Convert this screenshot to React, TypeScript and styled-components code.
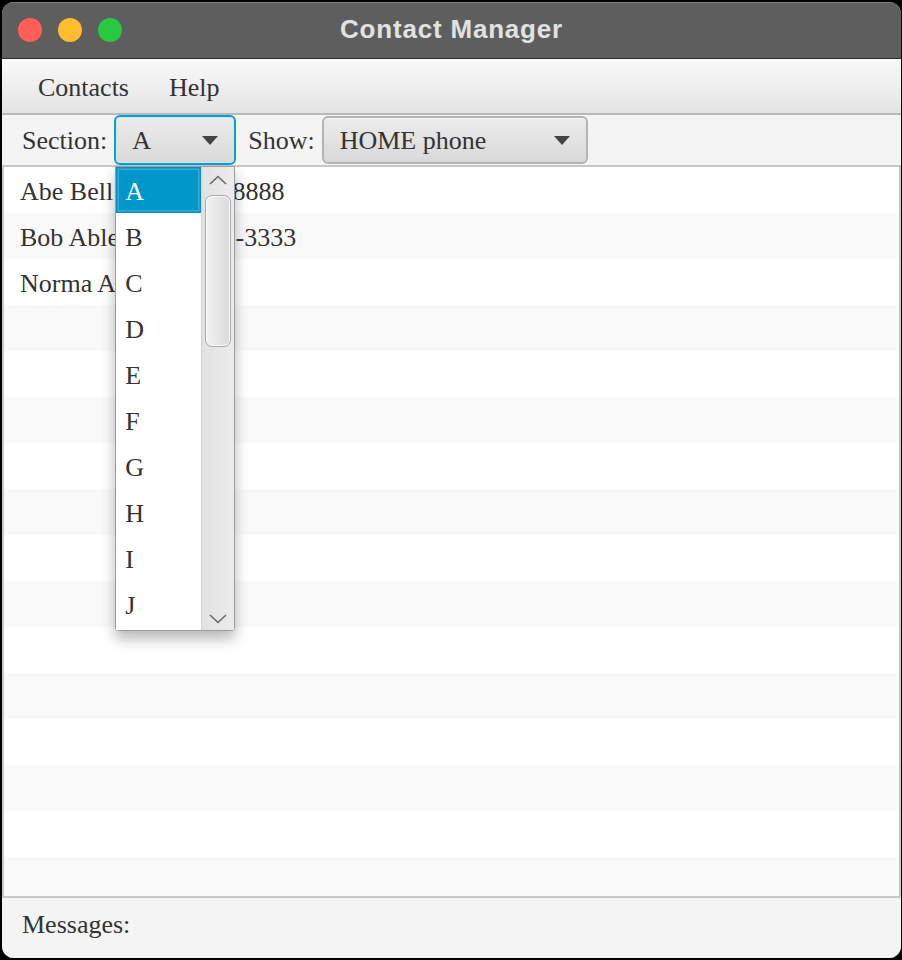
import React from "react";
import styled, { createGlobalStyle } from "styled-components";

const Global = createGlobalStyle`
  html, body { margin: 0; padding: 0; background: #000; }
  body { width: 902px; height: 960px; overflow: hidden; }
  * { box-sizing: border-box; }
`;

const SERIF = `"Liberation Serif", "Times New Roman", serif`;

const Window = styled.div`
  margin: 2px 0 0 2px;
  width: 899px;
  height: 956px;
  border-radius: 12px;
  overflow: hidden;
  background: #f4f4f4;
  display: flex;
  flex-direction: column;
  font-family: ${SERIF};
  font-size: 26px;
  color: #333;
  box-shadow: inset 0 0 0 1px #6a6a6a;
`;

const TitleBar = styled.div`
  position: relative;
  height: 57px;
  flex: none;
  background: #5e5e5e;
  border-top: 1px solid #7c7c7c;
  border-bottom: 1px solid #2a2a2a;
  display: flex;
  align-items: center;
  justify-content: center;
`;

const Lights = styled.div`
  position: absolute;
  left: 16px;
  top: 15px;
  display: flex;
  gap: 16px;
`;

const Light = styled.span<{ $c: string }>`
  width: 24px;
  height: 24px;
  border-radius: 50%;
  background: ${(p) => p.$c};
`;

const Title = styled.div`
  font-family: "Liberation Sans", Arial, sans-serif;
  font-weight: 700;
  font-size: 26px;
  letter-spacing: 0.8px;
  color: #e2e2e2;
  margin-top: -2px;
`;

const MenuBar = styled.div`
  height: 56px;
  flex: none;
  background: linear-gradient(#f9f9f9, #e4e4e4);
  border-bottom: 2px solid #b9b9b9;
  display: flex;
  align-items: center;
  padding: 4px 0 0 36px;
  gap: 40px;
`;

const MenuItem = styled.span``;

const ToolBar = styled.div`
  height: 52px;
  flex: none;
  background: #f4f4f4;
  border-bottom: 2px solid #c8c8c8;
  display: flex;
  align-items: center;
  padding-left: 20px;
`;

const Label = styled.span<{ $ml?: number; $mr?: number }>`
  margin-left: ${(p) => p.$ml ?? 0}px;
  margin-right: ${(p) => p.$mr ?? 8}px;
  padding-top: 1px;
`;

const ComboWrap = styled.div`
  position: relative;
`;

const Combo = styled.div<{ $w: number; $focused?: boolean }>`
  width: ${(p) => p.$w}px;
  height: ${(p) => (p.$focused ? 50 : 48)}px;
  border-radius: 6px;
  border: 2px solid ${(p) => (p.$focused ? "#0aa0d6" : "#b4b4b4")};
  background: linear-gradient(#ececec, #d9d9d9);
  box-shadow: ${(p) => (p.$focused ? "inset 0 0 0 1px #cfe9f3" : "inset 0 1px 0 #fafafa")};
  display: flex;
  align-items: center;
  justify-content: space-between;
  padding: 1px 16px 0 16px;
`;

const Arrow = styled.span`
  width: 0;
  height: 0;
  margin-top: -1px;
  border-left: 8.5px solid transparent;
  border-right: 8.5px solid transparent;
  border-top: 9px solid #444;
`;

const List = styled.div`
  flex: 1;
  background: #fff;
  border: 2px solid #c8c8c8;
  border-top: none;
  overflow: hidden;
`;

const Row = styled.div<{ $odd: boolean }>`
  height: 46px;
  display: flex;
  align-items: center;
  padding: 3px 0 0 16px;
  background: ${(p) => (p.$odd ? "#f9f9f9" : "#fff")};
  white-space: nowrap;
`;

const Phone = styled.span<{ $gap: number }>`
  margin-left: ${(p) => p.$gap}px;
`;

const StatusBar = styled.div`
  height: 60px;
  flex: none;
  background: #f4f4f4;
  padding: 12px 0 0 20px;
  line-height: 30px;
`;

const Popup = styled.div`
  position: absolute;
  left: 1px;
  top: 51px;
  width: 120px;
  height: 465px;
  background: #fff;
  border: 1px solid #9c9c9c;
  border-radius: 0 0 3px 3px;
  box-shadow: 0 8px 14px rgba(0, 0, 0, 0.28);
  display: flex;
  z-index: 10;
`;

const Cells = styled.div`
  flex: 1;
  overflow: hidden;
`;

const Cell = styled.div<{ $sel?: boolean }>`
  height: 46px;
  display: flex;
  align-items: center;
  padding: 3px 0 0 9px;
  background: ${(p) => (p.$sel ? "#0096c9" : "#fff")};
  color: ${(p) => (p.$sel ? "#fff" : "#333")};
  box-shadow: ${(p) => (p.$sel ? "inset 0 0 0 1.5px #0390c2, inset 0 0 0 3px #3eaad6" : "none")};
`;

const ScrollBar = styled.div`
  position: relative;
  width: 33px;
  background: linear-gradient(90deg, #e2e2e2, #ececec);
  border-left: 1px solid #d4d4d4;
`;

const Chevron = styled.svg<{ $top?: number; $bottom?: number }>`
  position: absolute;
  left: 7px;
  ${(p) => (p.$top !== undefined ? `top: ${p.$top}px;` : `bottom: ${p.$bottom}px;`)}
`;

const Thumb = styled.div`
  position: absolute;
  left: 3px;
  top: 28px;
  width: 26px;
  height: 152px;
  border-radius: 7px;
  border: 1px solid #a9a9a9;
  background: linear-gradient(90deg, #f2f2f2, #dadada);
  box-shadow: inset 0 0 0 1px #fbfbfb;
`;

const letters = ["A", "B", "C", "D", "E", "F", "G", "H", "I", "J", "K"];

const rows: { name: string; phone?: string; gap?: number }[] = [
  { name: "Abe Bell", phone: "212-555-8888", gap: 24 },
  { name: "Bob Able", phone: "212-555-3333", gap: 30 },
  { name: "Norma Adams" },
];

export default function App() {
  return (
    <>
      <Global />
      <Window>
        <TitleBar>
          <Lights>
            <Light $c="#ff5f57" />
            <Light $c="#febc2e" />
            <Light $c="#28c840" />
          </Lights>
          <Title>Contact Manager</Title>
        </TitleBar>
        <MenuBar>
          <MenuItem>Contacts</MenuItem>
          <MenuItem>Help</MenuItem>
        </MenuBar>
        <ToolBar>
          <Label $mr={7}>Section:</Label>
          <ComboWrap>
            <Combo $w={122} $focused>
              <span>A</span>
              <Arrow />
            </Combo>
            <Popup>
              <Cells>
                {letters.map((l, i) => (
                  <Cell key={l} $sel={i === 0}>
                    {l}
                  </Cell>
                ))}
              </Cells>
              <ScrollBar>
                <Chevron $top={8} width="18" height="10" viewBox="0 0 18 10">
                  <polyline points="1,9 9,1.5 17,9" fill="none" stroke="#6a6a6a" strokeWidth="1.6" />
                </Chevron>
                <Thumb />
                <Chevron $bottom={6} width="18" height="10" viewBox="0 0 18 10">
                  <polyline points="1,1 9,8.5 17,1" fill="none" stroke="#6a6a6a" strokeWidth="1.6" />
                </Chevron>
              </ScrollBar>
            </Popup>
          </ComboWrap>
          <Label $ml={12} $mr={7}>Show:</Label>
          <Combo $w={266}>
            <span>HOME phone</span>
            <Arrow />
          </Combo>
        </ToolBar>
        <List>
          {Array.from({ length: 16 }).map((_, i) => (
            <Row key={i} $odd={i % 2 === 1}>
              {rows[i] ? (
                <>
                  <span>{rows[i].name}</span>
                  {rows[i].phone && <Phone $gap={rows[i].gap ?? 20}>{rows[i].phone}</Phone>}
                </>
              ) : null}
            </Row>
          ))}
        </List>
        <StatusBar>Messages:</StatusBar>
      </Window>
    </>
  );
}
